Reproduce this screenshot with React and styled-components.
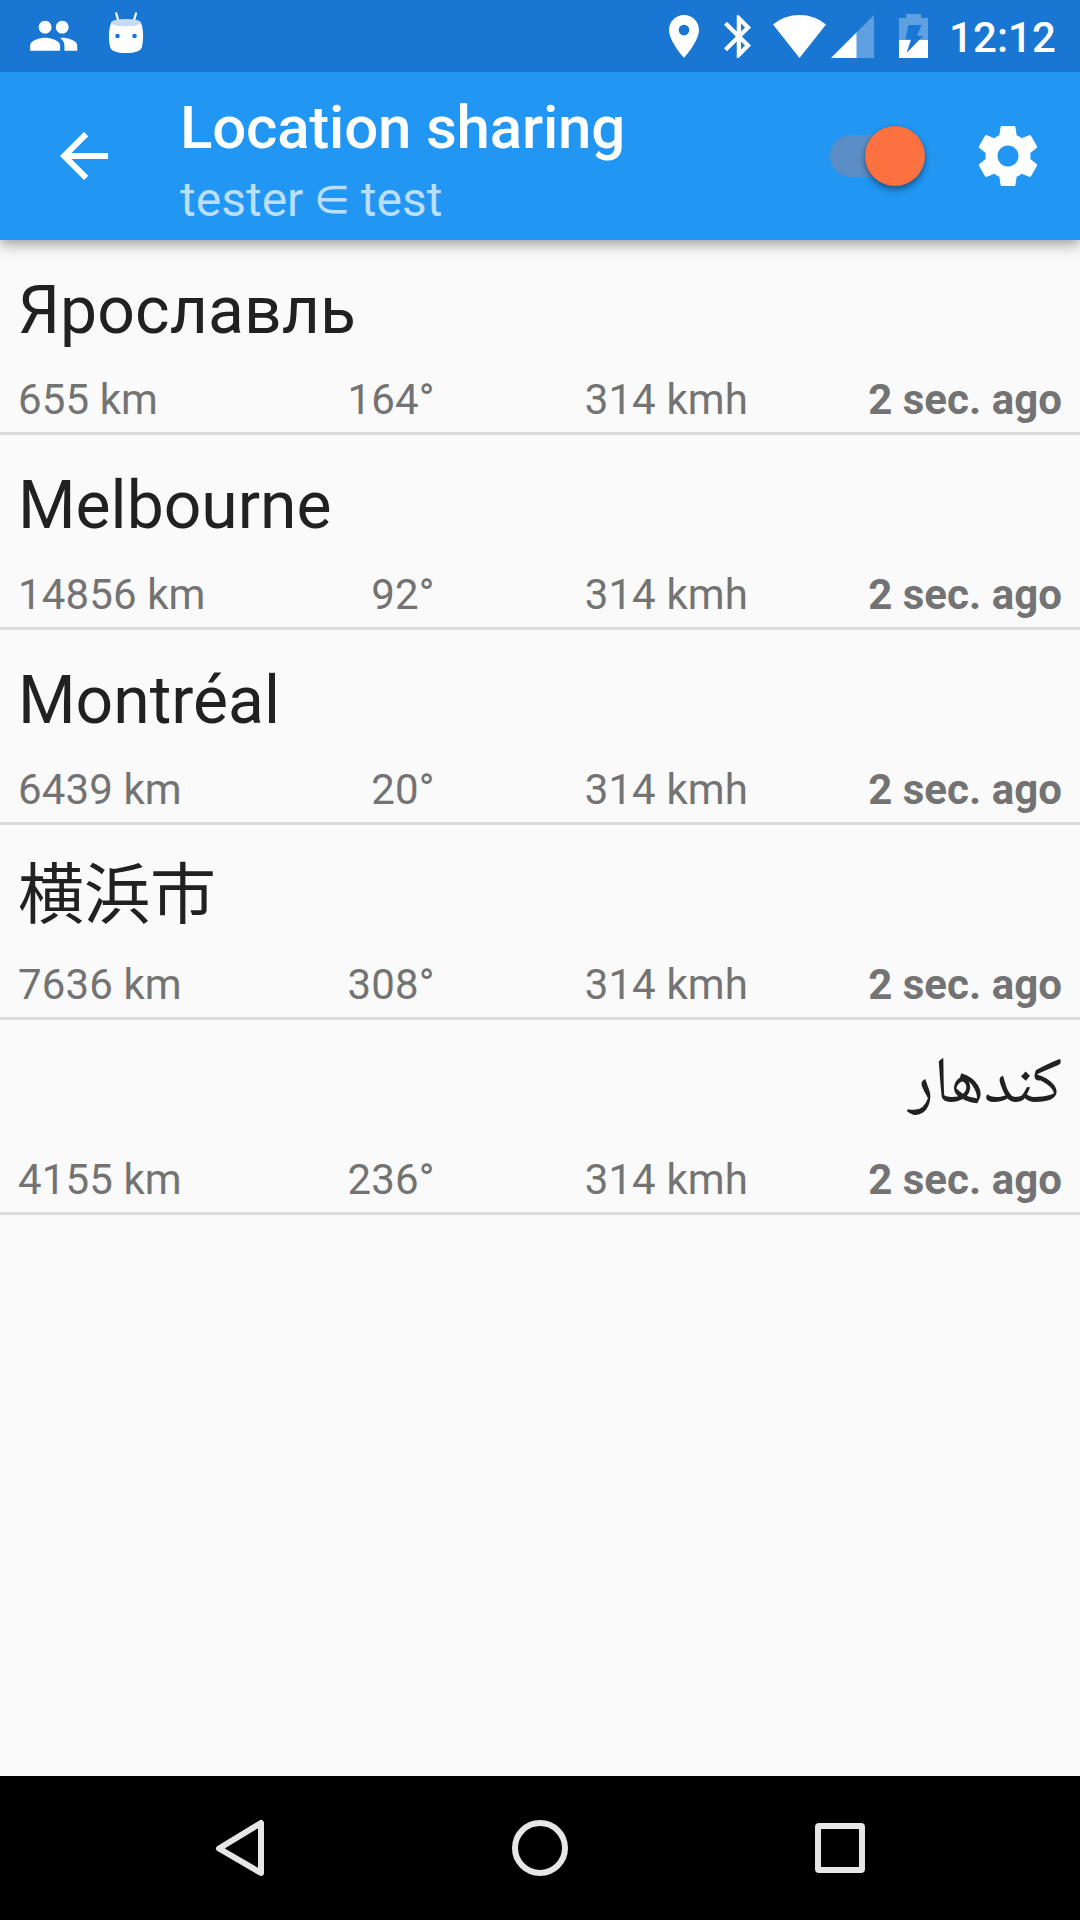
import React from "react";
import styled, { createGlobalStyle } from "styled-components";

const GlobalStyle = createGlobalStyle`
  * { box-sizing: border-box; }
  html, body { margin: 0; padding: 0; background: #fafafa; }
  body { font-family: Roboto, "Noto Sans CJK JP", "Noto Naskh Arabic", "DejaVu Sans", sans-serif; }
`;

const Screen = styled.div`
  width: 1080px;
  height: 1920px;
  display: flex;
  flex-direction: column;
  overflow: hidden;
  background: #fafafa;
`;

const StatusBar = styled.div`
  height: 72px;
  flex: none;
  display: flex;
  align-items: center;
  justify-content: space-between;
  padding: 0 24px 0 18px;
  background: #1976d2;
  color: #fff;
  z-index: 2;
`;

const StatusGroup = styled.div`
  display: flex;
  align-items: center;
`;

const Notification = styled.div`
  width: 72px;
  height: 72px;
  display: flex;
  align-items: center;
  justify-content: center;
`;

const Glyph = styled.svg`
  display: block;
  flex: none;
  width: ${(p) => p.$w}px;
  height: ${(p) => p.$h || p.$w}px;
  margin-right: ${(p) => p.$after || 0}px;
  fill: currentColor;
`;

const Clock = styled.div`
  font-size: 42px;
  line-height: 72px;
  font-weight: 500;
  letter-spacing: 0.1px;
  padding-top: 2px;
  height: 72px;
`;

const AppBar = styled.header`
  height: 168px;
  flex: none;
  display: flex;
  align-items: center;
  padding: 0 36px 0 48px;
  background: #2196f3;
  color: #fff;
  box-shadow: 0 6px 12px rgba(0, 0, 0, 0.3), 0 1px 6px rgba(0, 0, 0, 0.06);
  z-index: 1;
`;

const Titles = styled.div`
  flex: 1;
  padding: 16px 0 0 60px;
`;

const Title = styled.h1`
  margin: 0;
  font-size: 60px;
  line-height: 72px;
  font-weight: 500;
  letter-spacing: -0.2px;
  white-space: nowrap;
`;

const Subtitle = styled.div`
  font-size: 48px;
  line-height: 72px;
  height: 72px;
  color: #bbdefb;
  white-space: nowrap;
`;

const Member = styled.span`
  font-family: "Noto Sans Symbols", "Noto Sans Math", "DejaVu Sans", sans-serif;
  line-height: 1;
  vertical-align: 3px;
`;

const Track = styled.div`
  width: 90px;
  height: 42px;
  border-radius: 21px;
  background: #5b8dc6;
  display: flex;
  align-items: center;
  justify-content: flex-end;
  margin: 0 52px 1px 0;
`;

const Thumb = styled.div`
  flex: none;
  width: 60px;
  height: 60px;
  margin-right: -5px;
  border-radius: 50%;
  background: #fb7140;
  box-shadow: 0 4px 6px rgba(0, 0, 0, 0.38), 0 0 3px rgba(0, 0, 0, 0.15);
`;

const List = styled.main`
  flex: 1;
`;

const Row = styled.section`
  height: 195px;
  padding: 32px 18px 0;
  border-bottom: 3px solid #dadada;
`;

const Name = styled.div`
  height: 78px;
  font-size: 66px;
  line-height: 78px;
  letter-spacing: ${(p) => p.$track || 0}px;
  color: #212121;
  margin: ${(p) => (p.$raise ? `-${p.$raise}px 0 ${p.$raise}px` : 0)};
`;

const Details = styled.div`
  display: flex;
  padding-top: 25px;
  font-size: 42px;
  line-height: 50px;
  letter-spacing: 0.12px;
  color: #737373;
`;

const Cell = styled.div`
  width: ${(p) => p.$w}px;
  text-align: ${(p) => p.$align || "right"};
  font-weight: ${(p) => (p.$bold ? 700 : 400)};
  letter-spacing: ${(p) => (p.$bold ? "0.04px" : "inherit")};
  white-space: nowrap;
`;

const NavBar = styled.nav`
  height: 144px;
  flex: none;
  display: flex;
  align-items: center;
  justify-content: center;
  gap: 204px;
  background: #000;
  color: #e6e6e6;
`;

const people = [
  { name: "Ярославль", distance: "655 km", bearing: "164°", track: 0.1 },
  { name: "Melbourne", distance: "14856 km", bearing: "92°" },
  { name: "Montréal", distance: "6439 km", bearing: "20°" },
  { name: "横浜市", distance: "7636 km", bearing: "308°" },
  { name: "کندهار", distance: "4155 km", bearing: "236°", raise: 11 },
];

export default function App() {
  return (
    <Screen>
      <GlobalStyle />
      <StatusBar>
        <StatusGroup>
          <Notification>
            <Glyph $w={51.4} viewBox="0 0 24 24">
              <path d="M16 11c1.66 0 2.99-1.34 2.99-3S17.66 5 16 5s-3 1.34-3 3 1.34 3 3 3zm-8 0c1.66 0 2.99-1.34 2.99-3S9.66 5 8 5 5 6.340 5 8s1.340 3 3 3zm0 2c-2.330 0-7 1.170-7 3.500V19h14v-2.500c0-2.330-4.670-3.500-7-3.500zm8 0c-.29 0-.62.020-.97.050 1.160.84 1.970 1.970 1.970 3.450V19h6v-2.500c0-2.330-4.670-3.500-7-3.500z" />
            </Glyph>
          </Notification>
          <Notification>
            <Glyph $w={72} viewBox="90 0 72 72">
              <path d="M116.200 13.400L118.600 21.500M136 13.400L133.600 21.500" stroke="currentColor" strokeWidth="2.200" strokeLinecap="round" />
              <path d="M111.300 22.500C108.200 29 108.600 41 110.200 47C111 51 117 53 126 53S141 51 141.900 47C143.500 41 143.900 29 140.800 22.500C138 27 114 27 111.300 22.500Z" />
              <ellipse cx="126" cy="22.600" rx="14.900" ry="3.700" fill="#c6daf3" />
              <circle cx="117.500" cy="36" r="2.300" fill="#1976d2" />
              <circle cx="134.500" cy="36" r="2.300" fill="#1976d2" />
            </Glyph>
          </Notification>
        </StatusGroup>
        <StatusGroup>
          <Glyph $w={30} $h={43} $after={25} viewBox="5 2 14 20">
            <path d="M12 2C8.130 2 5 5.130 5 9c0 5.250 7 13 7 13s7-7.750 7-13c0-3.870-3.130-7-7-7zm0 9.500a2.500 2.500 0 1 1 0-5 2.500 2.500 0 0 1 0 5z" />
          </Glyph>
          <Glyph $w={27} $h={43} $after={22} viewBox="5 2 12.710 20">
            <path d="M17.710 7.710L12 2h-1v7.590L6.410 5 5 6.410 10.590 12 5 17.590 6.410 19 11 14.410V22h1l5.710-5.710-4.300-4.290 4.300-4.290zM13 5.830l1.880 1.880L13 9.590V5.830zm1.880 10.460L13 18.170v-3.760l1.880 1.880z" />
          </Glyph>
          <Glyph $w={53} $h={43} $after={5} viewBox="0 0 53 43">
            <path d="M0 9.500Q11 0 26.500 0T53 9.500L26.500 43Z" />
          </Glyph>
          <Glyph $w={43} $h={43} $after={25} viewBox="0 0 43 43">
            <path d="M43 0V43H0Z" opacity="0.300" />
            <path d="M25.500 17.500V43H0Z" />
          </Glyph>
          <Glyph $w={29} $h={44} $after={21} viewBox="0 0 29 44">
            <path d="M7 0H22V4H29V26H0V4H7Z" fill="#5e9fe0" />
            <path d="M0 26h29v18H0z" />
            <path d="M9.500 11H22.500L18 22H24L7.500 39L12 25.500H6.500Z" fill="#1976d2" />
          </Glyph>
          <Clock>12:12</Clock>
        </StatusGroup>
      </StatusBar>

      <AppBar>
        <Glyph $w={72} viewBox="0 0 24 24">
          <path d="M20 11H7.830l5.590-5.590L12 4l-8 8 8 8 1.410-1.410L7.830 13H20v-2z" />
        </Glyph>
        <Titles>
          <Title>Location sharing</Title>
          <Subtitle>tester <Member>∈</Member> test</Subtitle>
        </Titles>
        <Track>
          <Thumb />
        </Track>
        <Glyph $w={72} viewBox="0 0 24 24">
          <path d="M19.430 12.980c.04-.32.07-.64.07-.98s-.03-.66-.07-.98l2.110-1.650c.19-.15.24-.42.12-.64l-2-3.460c-.12-.22-.39-.3-.61-.22l-2.490 1c-.52-.4-1.080-.73-1.690-.98l-.38-2.650C14.460 2.180 14.250 2 14 2h-4c-.25 0-.46.18-.49.42l-.38 2.650c-.61.25-1.170.59-1.690.98l-2.490-1c-.23-.09-.49 0-.61.22l-2 3.460c-.13.22-.07.49.12.64l2.110 1.650c-.04.32-.07.65-.07.98s.03.66.07.98l-2.110 1.650c-.19.15-.24.42-.12.64l2 3.460c.12.22.39.3.61.22l2.490-1c.52.4 1.080.73 1.690.98l.38 2.650c.03.24.24.42.49.42h4c.25 0 .46-.18.49-.42l.38-2.650c.61-.25 1.170-.59 1.690-.98l2.490 1c.23.09.49 0 .61-.22l2-3.460c.12-.22.07-.49-.12-.64l-2.110-1.650zM12 15.500c-1.930 0-3.500-1.570-3.500-3.500s1.570-3.500 3.500-3.500 3.500 1.570 3.500 3.500-1.570 3.500-3.500 3.500z" />
        </Glyph>
      </AppBar>

      <List>
        {people.map((p) => (
          <Row key={p.name}>
            <Name dir="auto" $raise={p.raise} $track={p.track}>{p.name}</Name>
            <Details>
              <Cell $w={209} $align="left">{p.distance}</Cell>
              <Cell $w={207.5}>{p.bearing}</Cell>
              <Cell $w={313.5}>314 kmh</Cell>
              <Cell $w={314} $bold>2 sec. ago</Cell>
            </Details>
          </Row>
        ))}
      </List>

      <NavBar>
        <Glyph $w={96} viewBox="192 1800 96 96">
          <path d="M261 1823V1873L219 1848.500Z" fill="none" stroke="currentColor" strokeWidth="6" strokeLinejoin="round" />
        </Glyph>
        <Glyph $w={96} viewBox="0 0 96 96">
          <circle cx="48" cy="48" r="25" fill="none" stroke="currentColor" strokeWidth="6" />
        </Glyph>
        <Glyph $w={96} viewBox="0 0 96 96">
          <rect x="26" y="26" width="44" height="44" rx="1" fill="none" stroke="currentColor" strokeWidth="6" strokeLinejoin="round" />
        </Glyph>
      </NavBar>
    </Screen>
  );
}
